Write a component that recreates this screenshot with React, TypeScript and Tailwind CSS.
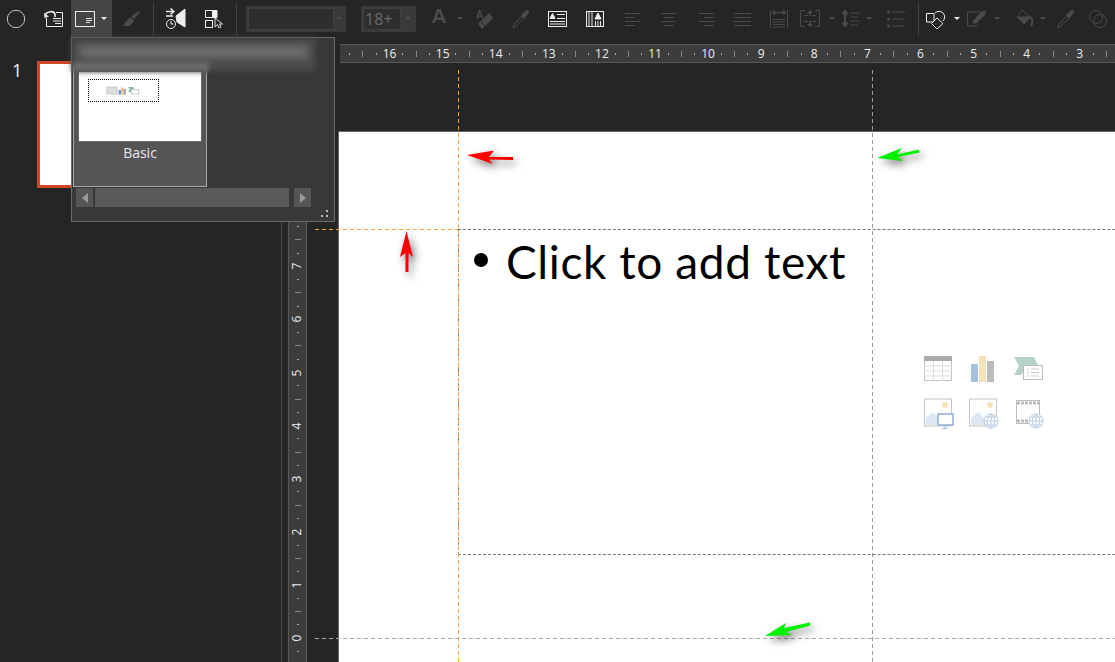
import React from 'react';

const hTicks = ['', '16', '15', '14', '13', '12', '11', '10', '9', '8', '7', '6', '5', '4', '3', ''];
const vTicks = ['', '10', '9', '8', '7', '6', '5', '4', '3', '2', '1', '0', ''];

const Caret = ({ className = '', color = '#4a4a4a' }: { className?: string; color?: string }) => (
  <svg width="8" height="20" viewBox="0 0 8 20" className={className}>
    <path d="M1 8h6l-3 3z" fill={color} />
  </svg>
);

const AlignIcon = ({ className, mode }: { className: string; mode: 'l' | 'c' | 'r' }) => {
  const x = (w: number) => (mode === 'l' ? 0 : mode === 'c' ? (15 - w) / 2 : 15 - w);
  return (
    <svg width="15" height="20" viewBox="0 0 15 20" className={className} stroke="#4a4a4a">
      {[5.5, 9.5, 13.5, 17.5].map((y, i) => {
        const w = i % 2 ? 10 : 15;
        return <path key={y} d={`M${x(w)} ${y - 1}h${w}`} />;
      })}
    </svg>
  );
};

const Dropper = ({ className }: { className: string }) => (
  <svg width="18" height="20" viewBox="0 0 18 20" className={className}>
    <path d="M2 15 L10 7 L12 9 L4 17 L1 19z" fill="none" stroke="#4a4a4a" />
    <path d="M9 6 L14 1.5 Q16 0.5 17 2 Q17.5 3.5 16 5 L12 10z" fill="#4a4a4a" />
  </svg>
);

const Toolbar = () => (
  <div className="h-[44px] flex items-start shrink-0">
    <div className="h-[38px] flex items-center">
      <svg width="20" height="20" viewBox="0 0 20 20" className="ml-[6px]">
        <circle cx="10" cy="10" r="8.7" fill="none" stroke="#c4c4c4" />
      </svg>
      <svg width="21" height="20" viewBox="0 0 21 20" className="ml-[17px]" fill="none" stroke="#eee">
        <path d="M13 3.500H19.500V17.500H3.500V9" />
        <path d="M10 9.500h8M10 12h8M12 14.500h6" />
        <path d="M2 5.500C4 2.500 11 1 12 5.500V8" strokeWidth="1.600" />
        <path d="M1 4 1.500 9 6 7.500z" fill="#eee" stroke="none" />
      </svg>
      <div className="ml-[7px] w-[41px] h-[37px] self-start bg-[#454545] flex items-center">
        <svg width="20" height="16" viewBox="0 0 20 16" className="ml-[4px]" fill="none" stroke="#eee">
          <rect x="0.500" y="0.500" width="19" height="15" />
          <path d="M11 7.500h6M11 9.500h6M11 11.500h4" stroke="#ddd" />
        </svg>
        <svg width="8" height="6" viewBox="0 0 8 6" className="ml-[5px]">
          <path d="M1 1h6l-3 3z" fill="#eee" />
        </svg>
      </div>
      <svg width="18" height="20" viewBox="0 0 18 20" className="ml-[10px]" fill="#4a4a4a">
        <path d="M16.500 2 18 3.500 12 10 9 7.500z" />
        <path d="M8 8 12 12 8 17H1L3.500 13z" />
      </svg>
      <div className="ml-[13px] w-px h-[33px] bg-[#444]" />
      <svg width="21" height="22" viewBox="0 0 21 22" className="ml-[11px]" fill="none" stroke="#eee">
        <path d="M1 3.500h7M5.500 0.500 9 3.500 5.500 6.500M1 8h7" strokeWidth="1.400" />
        <path d="M11 8 20 1V19L12 14z" fill="#eee" />
        <circle cx="6" cy="16" r="4.500" fill="#252525" />
        <path d="M6 13v3h2.500" />
      </svg>
      <svg width="18" height="20" viewBox="0 0 18 20" className="ml-[19px]" fill="none" stroke="#eee">
        <path d="M7.500 8.500H0.500V1.500H7.500" />
        <rect x="0.500" y="11.500" width="7" height="7" />
        <path d="M7.500 1.500H12V8.500H7.500z" fill="#eee" />
        <path d="M10 9 10 18 12.500 15.500 14 19 16 18 14.500 15 17.500 15z" fill="#252525" stroke="#ddd" />
      </svg>
      <div className="ml-[13px] w-px h-[33px] bg-[#444]" />
      <div className="ml-[9px] w-[100px] h-[26px] bg-[#3a3a3a] flex p-[2px]">
        <div className="w-[86px] bg-[#2e2e2e] border border-[#3f3f3f]" />
        <div className="flex-1 flex items-center justify-center">
          <svg width="8" height="6" viewBox="0 0 8 6"><path d="M1 1h6l-3 3z" fill="#4a4a4a" /></svg>
        </div>
      </div>
      <div className="ml-[15px] w-[55px] h-[26px] bg-[#3a3a3a] flex p-[2px]">
        <div className="w-[38px] bg-[#2e2e2e] border border-[#3f3f3f] text-[16px] leading-[20px] text-[#6a6a6a] pl-[1px] font-['Open_Sans',sans-serif]">18+</div>
        <div className="flex-1 flex items-center justify-center">
          <svg width="8" height="6" viewBox="0 0 8 6"><path d="M1 1h6l-3 3z" fill="#4f4f4f" /></svg>
        </div>
      </div>
      <svg width="14" height="20" viewBox="0 0 14 20" className="ml-[16px]" fill="#4a4a4a">
        <path d="M5 0h4l5 14h-3l-1-3H4l-1 3H0zM5 8.500h4L7 3z" fillRule="evenodd" />
      </svg>
      <Caret className="ml-[10px]" />
      <svg width="19" height="20" viewBox="0 0 19 20" className="ml-[11px]" fill="#4a4a4a">
        <path d="M3.500 1h2l3 9H7L6.500 8h-3L3 10H1.500zM4 6.500h2L5 3z" fillRule="evenodd" />
        <path d="M14 4 18 9 7 20 3 15z" />
        <path d="M5.500 12.500 10 17" stroke="#252525" />
      </svg>
      <Dropper className="ml-[18px]" />
      <svg width="19" height="16" viewBox="0 0 19 16" className="ml-[18px]" fill="none" stroke="#eee">
        <rect x="0.500" y="0.500" width="18" height="15" />
        <path d="M2 7.500 4.500 2.500 7 7.500z" fill="#eee" />
        <path d="M9 3.500h8M9 7.500h8M2 10.500h15M2 13h15" />
      </svg>
      <svg width="18" height="16" viewBox="0 0 18 16" className="ml-[19px]" fill="none" stroke="#eee">
        <rect x="0.500" y="0.500" width="17" height="15" />
        <path d="M3 1v14M6 1v14" />
        <path d="M9 8 12 2 15 8z" fill="#eee" />
        <path d="M9.500 10v5M12 10v5M14.500 10v5" />
      </svg>
      <AlignIcon className="ml-[21px]" mode="l" />
      <AlignIcon className="ml-[21px]" mode="c" />
      <AlignIcon className="ml-[23px]" mode="r" />
      <svg width="17" height="20" viewBox="0 0 17 20" className="ml-[20px]" stroke="#4a4a4a">
        <path d="M0 4.500h17M0 8.500h17M0 12.500h17M0 16.500h17" />
      </svg>
      <svg width="18" height="20" viewBox="0 0 18 20" className="ml-[19px]" fill="none" stroke="#4a4a4a">
        <path d="M0.500 1v18M17.500 1v18M3 10.500h12M3 13h12M3 15.500h12M3 18h12" />
        <path d="M3 3.500h12M5 1.500 3 3.500 5 5.500M13 1.500 15 3.500 13 5.500" strokeWidth="1.500" />
      </svg>
      <svg width="20" height="20" viewBox="0 0 20 20" className="ml-[12px]" fill="none" stroke="#4a4a4a">
        <path d="M5 1.500H0.500V17.500H5M15 1.500H19.500V17.500H15" />
        <path d="M4 6.500h4M12 6.500h4M4 12.500h4M12 12.500h4" />
        <path d="M10 2v5M8 4l2-2 2 2M10 12v5M8 15l2 2 2-2" strokeWidth="1.500" />
      </svg>
      <Caret className="ml-[8px]" />
      <svg width="18" height="20" viewBox="0 0 18 20" className="ml-[6px]" fill="none" stroke="#4a4a4a">
        <path d="M3 1v17" strokeWidth="2" />
        <path d="M0 5 3 1 6 5zM0 14 3 18 6 14z" fill="#4a4a4a" />
        <path d="M8 4h10M8 8h8M8 12h10M8 16h8" />
      </svg>
      <Caret className="ml-[5px]" />
      <svg width="18" height="20" viewBox="0 0 18 20" className="ml-[14px]" fill="#4a4a4a">
        <circle cx="1.500" cy="3" r="1.500" />
        <circle cx="1.500" cy="10" r="1.500" />
        <circle cx="1.500" cy="17" r="1.500" />
        <path d="M5 2.500h13v1H5zM5 9.500h13v1H5zM5 16.500h13v1H5z" />
      </svg>
      <div className="ml-[13px] w-px h-[33px] bg-[#444]" />
      <svg width="22" height="22" viewBox="0 0 22 22" className="ml-[7px]" fill="none" stroke="#eee">
        <path d="M0.500 5.500H8V14H0.500z" />
        <path d="M9 5A5.500 5.500 0 1 1 17 13" />
        <path d="M11 10 17 15.500 11 21 5.500 15.500z" fill="#252525" />
      </svg>
      <Caret className="ml-[5px]" color="#eee" />
      <svg width="20" height="20" viewBox="0 0 20 20" className="ml-[6px]" fill="none" stroke="#4a4a4a">
        <path d="M14 3H0.500V17H11" />
        <path d="M6 14 7 11 15 3 19 2 17.500 6 9 14z" fill="#4a4a4a" />
      </svg>
      <Caret className="ml-[6px]" />
      <svg width="17" height="20" viewBox="0 0 17 20" className="ml-[15px]" fill="none" stroke="#4a4a4a">
        <path d="M6 1 1 8 8 15 14 8z" />
        <path d="M14 8C17 9 17 13 15 17" strokeWidth="2" />
        <path d="M1 8H14L8 15z" fill="#4a4a4a" />
      </svg>
      <Caret className="ml-[6px]" />
      <Dropper className="ml-[10px]" />
      <svg width="18" height="20" viewBox="0 0 18 20" className="ml-[14px]" fill="none" stroke="#4a4a4a">
        <circle cx="7" cy="8" r="6.500" />
        <circle cx="11" cy="12" r="6.500" />
      </svg>
    </div>
  </div>
);

const HRuler = () => (
  <div className="ml-[58px] h-[19px] bg-[#3c3c3c] border-y border-[#585858] overflow-hidden flex items-center">
    <div className="flex shrink-0 ml-[-10.200px]">
      {hTicks.map((label, i) => (
        <div key={i} className="w-[53.100px] grid grid-cols-4 items-center justify-items-center shrink-0">
          <span className="text-[12px] leading-[16px] text-[#eee] font-['Open_Sans',sans-serif] h-[16px] whitespace-nowrap">{label}</span>
          <span className="w-px h-[2px] bg-[#aaa]" />
          <span className="w-px h-[6px] bg-[#888]" />
          <span className="w-px h-[2px] bg-[#aaa]" />
        </div>
      ))}
    </div>
  </div>
);

const VRuler = () => (
  <div className="ml-[6px] w-[19px] bg-[#3c3c3c] border-x border-[#585858] overflow-hidden shrink-0">
    <div className="flex flex-col mt-[-15.700px]">
      {vTicks.map((label, i) => (
        <div key={i} className="h-[53.100px] grid grid-rows-4 items-center justify-items-center shrink-0">
          <span className="-rotate-90 text-[12px] leading-[12px] text-[#eee] font-['Open_Sans',sans-serif] whitespace-nowrap">{label}</span>
          <span className="w-[2px] h-px bg-[#aaa]" />
          <span className="w-[6px] h-px bg-[#888]" />
          <span className="w-[2px] h-px bg-[#aaa]" />
        </div>
      ))}
    </div>
  </div>
);

const ContentIcons = () => (
  <div className="grid grid-cols-3 gap-[13px]">
    <svg width="30" height="30" viewBox="0 0 30 30" fill="none" stroke="#c4c4c4">
      <rect x="1.500" y="1.500" width="27" height="24" />
      <rect x="1" y="1" width="28" height="5" fill="#aaa" stroke="none" />
      <path d="M1 11h28M1 16h28M1 21h28M10.500 6v20M19.500 6v20" stroke="#ddd" />
    </svg>
    <svg width="30" height="30" viewBox="0 0 30 30">
      <rect x="3" y="9" width="7" height="18" fill="#a9c0dc" />
      <rect x="11" y="1" width="7" height="26" fill="#f4e2bb" />
      <rect x="19" y="6" width="7" height="21" fill="#bcbcbc" />
    </svg>
    <svg width="30" height="30" viewBox="0 0 30 30">
      <path d="M1 2H21L25 10H10V18L8 20H1L6 11z" fill="#b9d2c8" />
      <rect x="10.500" y="10.500" width="19" height="14" fill="#fff" stroke="#bbb" />
      <path d="M14 14h2M18 14h8M14 17.500h2M18 17.500h8M14 21h2M18 21h8" stroke="#ccc" />
    </svg>
    <svg width="32" height="32" viewBox="0 0 32 32" fill="none">
      <rect x="1.500" y="1" width="27" height="27" stroke="#c4c4c4" />
      <circle cx="22" cy="7" r="3" fill="#f4e2bb" />
      <path d="M3 27V20L10 14 17 21V27z" fill="#dde7f1" />
      <rect x="15" y="16" width="15" height="11" fill="#fff" stroke="#a9c0dc" strokeWidth="2" />
      <path d="M22 27v3M19 30.500h6" stroke="#a9c0dc" />
    </svg>
    <svg width="32" height="32" viewBox="0 0 32 32" fill="none">
      <rect x="1.500" y="1" width="27" height="27" stroke="#c4c4c4" />
      <circle cx="22" cy="7" r="3" fill="#f4e2bb" />
      <path d="M3 27V20L10 14 17 21V27z" fill="#dde7f1" />
      <circle cx="23" cy="23" r="7" fill="#fff" stroke="#b8cbe2" />
      <path d="M16 23h14M17 19h12M17 27h12M23 16v14M23 16c-5 4-5 10 0 14M23 16c5 4 5 10 0 14" stroke="#b8cbe2" />
    </svg>
    <svg width="32" height="32" viewBox="0 0 32 32" fill="none">
      <rect x="3.500" y="2.500" width="23" height="23" stroke="#bbb" />
      <path d="M4 5h22M4 23h22" stroke="#bbb" strokeWidth="3" strokeDasharray="3 1" />
      <circle cx="23" cy="23" r="7" fill="#fff" stroke="#b8cbe2" />
      <path d="M16 23h14M17 19h12M17 27h12M23 16v14M23 16c-5 4-5 10 0 14M23 16c5 4 5 10 0 14" stroke="#b8cbe2" />
    </svg>
  </div>
);

const LayoutMenu = () => (
  <div className="absolute left-[71px] top-[37px] w-[264px] h-[185px] bg-[#383838] border border-[#6a6a6a] flex flex-col">
    <div className="h-[28px] shrink-0" />
    <div className="ml-px w-[134px] h-[121px] shrink-0 bg-[#555] border border-[#a8a8a8] border-t-[#777] flex flex-col items-center">
      <div className="mt-[5px] w-[124px] h-[70px] shrink-0 bg-white border-b border-x border-[#667] pt-[7px] pl-[9px]">
        <div className="w-[71px] h-[23px] border border-dotted border-black flex items-start justify-center gap-[1px] pt-[6px] pr-[2px]">
          <svg width="34" height="9" viewBox="0 0 34 9">
            <rect x="0" y="1" width="11" height="7" fill="#dcdcdc" stroke="#ccc" />
            <rect x="12.500" y="4" width="2.500" height="4.500" fill="#6f9ad0" />
            <rect x="15" y="1.500" width="2.500" height="7" fill="#eac77c" />
            <rect x="17.500" y="3" width="2.500" height="5.500" fill="#aaa" />
            <path d="M22 1H27L29 4H25V6H22L24 3.500z" fill="#86b8a5" />
            <rect x="25.500" y="3.500" width="7" height="4.500" fill="#fff" stroke="#ccc" />
          </svg>
        </div>
      </div>
      <span className="mt-[1px] text-[14px] leading-[19px] text-[#e8e8e8] font-['Open_Sans',sans-serif]">Basic</span>
    </div>
    <div className="flex mt-[1px] ml-[4px] h-[19px]">
      <div className="w-[17px] bg-[#555] flex items-center justify-center">
        <svg width="6" height="10" viewBox="0 0 6 10"><path d="M6 0V10L0 5z" fill="#999" /></svg>
      </div>
      <div className="ml-[2px] w-[194px] bg-[#595959]" />
      <div className="ml-[5px] w-[17px] bg-[#555] flex items-center justify-center">
        <svg width="6" height="10" viewBox="0 0 6 10"><path d="M0 0V10L6 5z" fill="#999" /></svg>
      </div>
    </div>
    <svg width="8" height="8" viewBox="0 0 8 8" className="absolute right-[5px] bottom-[3px]" fill="#bbb">
      <rect x="5" y="0" width="2" height="2" />
      <rect x="5" y="5" width="2" height="2" />
      <rect x="0" y="5" width="2" height="2" />
    </svg>
    {/* smeared title of the layout group */}
    <div className="absolute left-0 top-0 w-[243px] h-[33px] bg-[#4c4c4c] blur-[3px]" />
    <div className="absolute left-[8px] top-[9px] w-[228px] h-[10px] bg-[#747474] blur-[4px]" />
    <div className="absolute left-[1px] top-[24px] w-[136px] h-[9px] bg-[#6a6a6a] blur-[2px]" />
  </div>
);

export default function App() {
  return (
    <div className="relative w-[1115px] h-[662px] overflow-hidden bg-[#252525] flex flex-col font-['Open_Sans',sans-serif]">
      <Toolbar />
      <div className="flex-1 flex min-h-0">
        <div className="w-[282px] shrink-0 border-r border-[#4a4a4a] flex items-start pt-[17px]">
          <span className="ml-[12px] w-[25px] text-[18px] leading-[18px] text-[#f0f0f0]">1</span>
          <div className="w-[224px] h-[127px] bg-white border-[3px] border-[#d24726]" />
        </div>
        <div className="flex-1 flex flex-col min-w-0">
          <HRuler />
          <div className="flex-1 flex min-h-0">
            <VRuler />
            <div className="ml-[31px] flex-1 pt-[68px] min-w-0">
              <div className="relative h-full bg-white border-l border-t border-[#666]">
                <div className="absolute left-[119px] top-[97px] w-[1052px] h-[326px] border border-dashed border-[#777] flex items-center justify-center">
                  <div className="absolute left-[15px] top-[1px] flex items-start font-['Lato',sans-serif] text-[46px] leading-[62px] tracking-[0.6px] text-black whitespace-nowrap">
                    <span className="w-[14px] h-[14px] mt-[22px] mr-[18px] rounded-full bg-black" />
                    <span>Click to add text</span>
                  </div>
                  <ContentIcons />
                </div>
              </div>
            </div>
          </div>
        </div>
      </div>

      {/* drawing guides */}
      <div className="absolute left-[458px] top-[70px] bottom-0 w-px bg-[repeating-linear-gradient(180deg,#f5a833_0_4px,transparent_4px_7px)]" />
      <div className="absolute left-[872px] top-[70px] bottom-0 w-px bg-[repeating-linear-gradient(180deg,#9a9a9a_0_4px,transparent_4px_7px)]" />
      <div className="absolute left-[315px] top-[229px] w-[143px] h-px bg-[repeating-linear-gradient(90deg,#f5a833_0_4px,transparent_4px_7px)]" />
      <div className="absolute left-[315px] right-0 top-[638px] h-px bg-[repeating-linear-gradient(90deg,#a8a8a8_0_4px,transparent_4px_7px)]" />

      {/* annotation arrows */}
      <svg width="60" height="30" viewBox="0 0 60 30" className="absolute left-[460px] top-[143px] drop-shadow-[3px_4px_4px_rgba(0,0,0,0.55)]">
        <path d="M7 12 34 7.500 29 14 53 14 53 17 29 16.500 33 21z" fill="#ff0000" />
      </svg>
      <svg width="30" height="50" viewBox="0 0 30 50" className="absolute left-[392px] top-[228px] drop-shadow-[3px_4px_4px_rgba(0,0,0,0.55)]">
        <path d="M14.500 3 21 29 16.500 25 16.500 44 13.500 44 13.500 25 8 29z" fill="#ff0000" />
      </svg>
      <svg width="60" height="30" viewBox="0 0 60 30" className="absolute left-[870px] top-[142px] drop-shadow-[3px_4px_4px_rgba(0,0,0,0.55)]">
        <path d="M7 16 32 6 27 12.500 49 7.500 49.500 10.500 28 15 33 19z" fill="#00f000" />
      </svg>
      <svg width="60" height="30" viewBox="0 0 60 30" className="absolute left-[757px] top-[616px] drop-shadow-[3px_4px_4px_rgba(0,0,0,0.55)]">
        <path d="M8 20 29 7 27 12 53 6.500 53.500 9.500 29 16 35 19z" fill="#00f000" />
      </svg>

      <LayoutMenu />
    </div>
  );
}
